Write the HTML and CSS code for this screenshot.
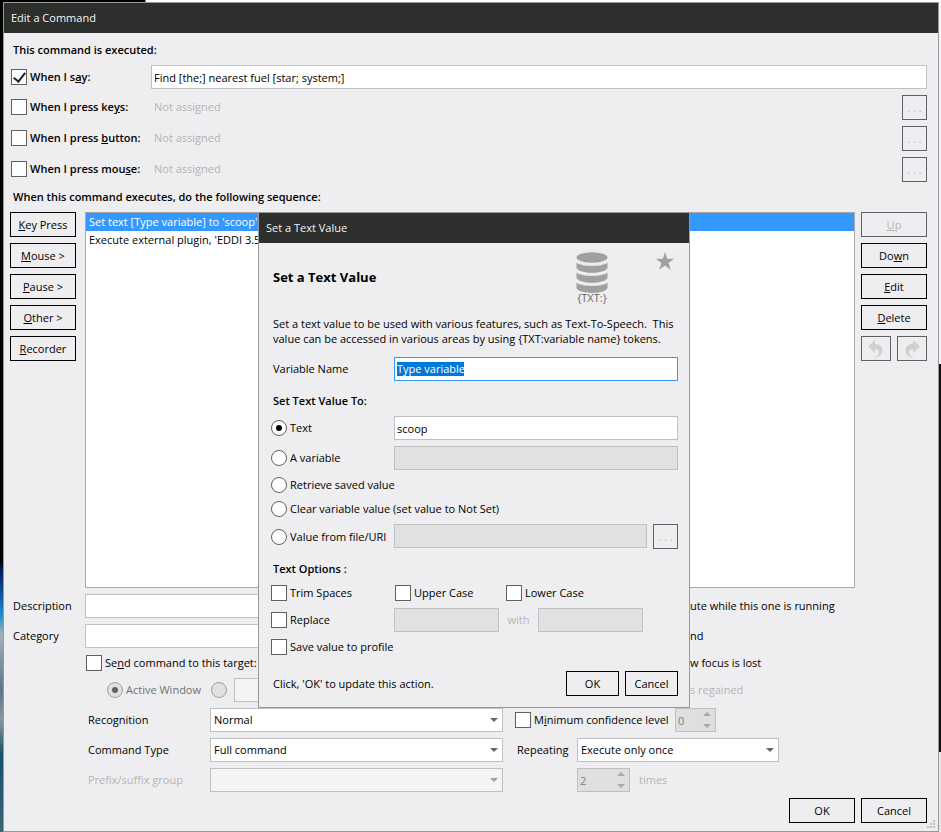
FILE: index.html
```html
<!DOCTYPE html>
<html lang="en">
<head>
<meta charset="UTF-8">
<meta name="viewport" content="width=device-width, initial-scale=1.0">
<title>Edit a Command</title>
<link rel="stylesheet" href="styles.css">
</head>
<body>
<div class="window">
  <div class="titlebar">Edit a Command</div>
  <form class="content">
    <h2>This command is executed:</h2>
    <div class="trigger">
      <label class="check"><input type="checkbox" checked><span>When I s<u>a</u>y:</span></label>
      <input class="field" type="text" aria-label="Spoken phrase" value="Find [the;] nearest fuel [star; system;]">
    </div>
    <div class="trigger">
      <label class="check"><input type="checkbox"><span>When I press ke<u>y</u>s:</span></label>
      <span class="unset">Not assigned</span>
      <button type="button" class="btn dots" disabled>. . .</button>
    </div>
    <div class="trigger">
      <label class="check"><input type="checkbox"><span>When I press <u>b</u>utton:</span></label>
      <span class="unset">Not assigned</span>
      <button type="button" class="btn dots" disabled>. . .</button>
    </div>
    <div class="trigger">
      <label class="check"><input type="checkbox"><span>When I press mou<u>s</u>e:</span></label>
      <span class="unset">Not assigned</span>
      <button type="button" class="btn dots" disabled>. . .</button>
    </div>

    <h2>When this command executes, do the following sequence:</h2>
    <div class="sequence">
      <div class="btn-column">
        <button type="button" class="btn"><u>K</u>ey Press</button>
        <button type="button" class="btn"><u>M</u>ouse &gt;</button>
        <button type="button" class="btn"><u>P</u>ause &gt;</button>
        <button type="button" class="btn"><u>O</u>ther &gt;</button>
        <button type="button" class="btn"><u>R</u>ecorder</button>
      </div>
      <ul class="actions">
        <li class="selected">Set text [Type variable] to 'scoop'</li>
        <li>Execute external plugin, 'EDDI 3.5.</li>
      </ul>
      <div class="btn-column">
        <button type="button" class="btn" disabled><u>U</u>p</button>
        <button type="button" class="btn">Do<u>w</u>n</button>
        <button type="button" class="btn"><u>E</u>dit</button>
        <button type="button" class="btn"><u>D</u>elete</button>
        <div class="history">
          <button type="button" class="btn" aria-label="Undo" disabled>
            <svg width="16" height="18" viewBox="0 0 16 18"><path d="M0 6.5 L7 0 V3.8 C12 4 15 7 14.6 11 C14.2 15 10.5 17.6 6 17.5 C9.5 16.5 11 14.5 10.800 12.300 C10.6 10.3 9.5 9.3 7 9.2 V13 Z"/></svg>
          </button>
          <button type="button" class="btn" aria-label="Redo" disabled>
            <svg width="16" height="18" viewBox="0 0 16 18"><path d="M16 6.5 L9 0 V3.8 C4 4 1 7 1.4 11 C1.8 15 5.5 17.6 10 17.5 C6.5 16.5 5 14.5 5.2 12.3 C5.4 10.3 6.5 9.3 9 9.2 V13 Z"/></svg>
          </button>
        </div>
      </div>
    </div>

    <div class="settings">
      <div class="left">
        <div class="row">
          <label class="name" for="description">Description</label>
          <input class="field" type="text" id="description">
        </div>
        <div class="row">
          <label class="name" for="category">Category</label>
          <input class="field" type="text" id="category">
        </div>
        <div class="target">
          <label class="check"><input type="checkbox"><span>Se<u>n</u>d command to this target:</span></label>
          <div class="target-options">
            <label class="check"><input type="radio" name="target" checked disabled><span>Active Window</span></label>
            <input type="radio" name="target" aria-label="Other window" disabled>
            <input class="field pale" type="text" aria-label="Window title" disabled>
          </div>
        </div>
        <div class="row option">
          <label for="recognition">Recognition</label>
          <span class="drop"><select id="recognition"><option>Normal</option></select></span>
        </div>
        <div class="row option">
          <label for="type">Command Type</label>
          <span class="drop"><select id="type"><option>Full command</option></select></span>
        </div>
        <div class="row option off">
          <label for="group">Prefix/suffix group</label>
          <span class="drop"><select id="group" disabled><option></option></select></span>
        </div>
      </div>

      <div class="right">
        <label class="check covered row"><input type="checkbox"><span>ute while this one is running</span></label>
        <label class="check covered row"><input type="checkbox"><span>nd</span></label>
        <div class="target">
          <label class="check covered"><input type="checkbox"><span>w focus is lost</span></label>
          <label class="check covered off"><input type="checkbox" disabled><span>s regained</span></label>
        </div>
        <div class="row confidence">
          <label class="check"><input type="checkbox"><span>M<u>i</u>nimum confidence level</span></label>
          <span class="spinner small"><input type="number" aria-label="Confidence level" value="0" disabled></span>
        </div>
        <div class="row repeat">
          <label for="repeat">Repeating</label>
          <span class="drop"><select id="repeat"><option>Execute only once</option></select></span>
        </div>
        <div class="row repeat off">
          <span class="spinner"><input type="number" id="times" value="2" disabled></span>
          <label for="times">times</label>
        </div>
      </div>
    </div>

    <div class="footer">
      <button type="button" class="btn">OK</button>
      <button type="button" class="btn">Cancel</button>
    </div>
  </form>
  <svg class="grip" width="8" height="8" viewBox="0 0 8 8"><path d="M6 0h2v2h-2zM3 3h2v2h-2zM6 3h2v2h-2zM0 6h2v2h-2zM3 6h2v2h-2zM6 6h2v2h-2z"/></svg>
</div>

<div class="dialog" role="dialog" aria-labelledby="dialog-title">
  <div class="titlebar" id="dialog-title">Set a Text Value</div>
  <form class="dialog-body">
    <div class="dialog-head">
      <h1>Set a Text Value</h1>
      <div class="token">
        <svg width="32" height="42" viewBox="0 0 32 42">
          <ellipse cx="16" cy="5.5" rx="15.5" ry="5.2"/>
          <path d="M.5 10.5 C5 15 27 15 31.5 10.5 V16 C29 22.3 3 22.3 .5 16 Z"/>
          <path d="M.5 20.5 C5 25 27 25 31.5 20.5 V26 C29 32.3 3 32.3 .5 26 Z"/>
          <path d="M.5 30.5 C5 35 27 35 31.5 30.5 V36 C29 42.6 3 42.6 .5 36 Z"/>
        </svg>
        <span>{TXT:}</span>
      </div>
      <svg class="star" width="18" height="18" viewBox="0 0 18 18"><path d="M9 0 L11.2 6.7 H18 L12.6 10.9 L14.7 17.7 L9 13.5 L3.3 17.7 L5.4 10.9 L0 6.7 H6.8 Z"/></svg>
    </div>
    <p>Set a text value to be used with various features, such as Text-To-Speech.&nbsp; This value can be accessed in various areas by using {TXT:variable name} tokens.</p>
    <div class="pair variable">
      <label for="variable">Variable Name</label>
      <div class="field focused"><input type="text" id="variable" value="Type variable"></div>
    </div>

    <h2>Set Text Value To:</h2>
    <div class="pair">
      <label class="check"><input type="radio" name="source" checked><span>Text</span></label>
      <input class="field" type="text" aria-label="Text" value="scoop">
    </div>
    <div class="pair">
      <label class="check"><input type="radio" name="source"><span>A variable</span></label>
      <input class="field" type="text" aria-label="A variable" disabled>
    </div>
    <label class="check"><input type="radio" name="source"><span>Retrieve saved value</span></label>
    <label class="check"><input type="radio" name="source"><span>Clear variable value (set value to Not Set)</span></label>
    <div class="pair">
      <label class="check"><input type="radio" name="source"><span>Value from file/URI</span></label>
      <div class="file">
        <input class="field" type="text" aria-label="File or URI" disabled>
        <button type="button" class="btn dots" disabled>. . .</button>
      </div>
    </div>

    <h2>Text Options :</h2>
    <div class="cases">
      <label class="check"><input type="checkbox"><span>Trim Spaces</span></label>
      <label class="check"><input type="checkbox"><span>Upper Case</span></label>
      <label class="check"><input type="checkbox"><span>Lower Case</span></label>
    </div>
    <div class="pair">
      <label class="check"><input type="checkbox"><span>Replace</span></label>
      <div class="replace off">
        <input class="field" type="text" id="find" aria-label="Replace" disabled>
        <label for="with">with</label>
        <input class="field" type="text" id="with" disabled>
      </div>
    </div>
    <label class="check"><input type="checkbox"><span>Save value to profile</span></label>

    <div class="dialog-footer">
      <span>Click, 'OK' to update this action.</span>
      <button type="button" class="btn">OK</button>
      <button type="button" class="btn">Cancel</button>
    </div>
  </form>
</div>
</body>
</html>
```
FILE: styles.css
```css
* {
  box-sizing: border-box;
}
body {
  margin: 0;
  padding: 2px 2px 0 3px;
  font: 11px/14px "Open Sans", "Noto Sans", sans-serif;
  color: #000;
  /* slivers of the desktop behind the window */
  background:
    linear-gradient(to right, #000 145px, #fff 146px) top / 100% 2px no-repeat,
    linear-gradient(#000 560px, #052060 572px, #0a4a90 590px, #1a90d0 615px, #9fb0bc 635px, #5f7488 690px, #8a95a0 720px, #15506a 755px, #3d6478 832px) left / 3px 100% no-repeat,
    linear-gradient(#f4f4f8 364px, #101214 364px, #101214 752px, #e8e8e8 752px) right / 3px 100% no-repeat;
}
h1, h2, p, ul {
  margin: 0;
  padding: 0;
}
h1 {
  font-size: 13px;
  line-height: 18px;
}
h2 {
  font-size: 11px;
  font-weight: 600;
  line-height: 18px;
  padding-left: 3px;
}
input, select, button {
  font: inherit;
  color: inherit;
  margin: 0;
}

/* windows */
.window, .dialog {
  background: #eeeef0;
  border: 1px solid #999;
}
.window {
  position: relative;
}
.titlebar {
  height: 30px;
  padding: 0 7px;
  line-height: 30px;
  background: #2d2f2c;
  color: #f4f4f4;
}
.content {
  display: flex;
  flex-direction: column;
  gap: 6px;
  padding: 8px 11px 8px 6px;
}

/* controls */
.field {
  width: 100%;
  min-width: 0;
  height: 24px;
  padding: 0 2px;
  border: 1px solid #c0c0c0;
  background: #fff;
}
.field:disabled {
  background: #e1e1e1;
}
.field.pale:disabled {
  background: #f4f4f4;
}
.btn {
  height: 25px;
  padding: 0;
  border: 1px solid #000;
  background: #eeeef0;
  text-align: center;
}
.btn:disabled {
  border-color: #606064;
  color: #b4b4b4;
}
.btn svg {
  display: block;
  margin: auto;
  fill: #d0d0d0;
}
.dots {
  flex: none;
  width: 25px;
}
.check {
  display: flex;
  align-items: center;
  gap: 3px;
  height: 18px;
  padding-left: 1px;
  white-space: nowrap;
}
input[type="checkbox"], input[type="radio"] {
  appearance: none;
  flex: none;
  display: flex;
  align-items: center;
  justify-content: center;
  width: 16px;
  height: 16px;
  border: 1px solid #606060;
  background: #fff;
}
input[type="radio"] {
  border-radius: 50%;
}
input[type="radio"]:checked::after {
  content: "";
  width: 6px;
  height: 6px;
  border-radius: 50%;
  background: #000;
}
input[type="radio"]:disabled {
  border-color: #a0a0a0;
  background: #e1e1e1;
}
input[type="radio"]:disabled::after {
  background: #606060;
}
input[type="checkbox"]:checked::after {
  content: "";
  width: 5px;
  height: 10px;
  margin-bottom: 3px;
  border: solid #222;
  border-width: 0 2px 2px 0;
  transform: rotate(38deg);
}
.off, .unset {
  color: #b4b4b4;
}
.drop {
  position: relative;
  flex: none;
}
.drop select {
  appearance: none;
  display: block;
  width: 100%;
  height: 24px;
  padding: 0 3px;
  border: 1px solid #c0c0c0;
  border-radius: 0;
  background: #fff;
}
.drop select:disabled {
  background: #f4f4f4;
  opacity: 1;
}
.drop::after {
  content: "";
  position: absolute;
  top: 10px;
  right: 5px;
  border: 4px solid transparent;
  border-top: 4px solid #666;
  border-bottom: 0;
  pointer-events: none;
}
.off .drop::after {
  border-top-color: #a0a0a0;
}
.spinner {
  position: relative;
  flex: none;
  width: 53px;
}
.spinner.small {
  width: 41px;
}
.spinner input {
  appearance: textfield;
  display: block;
  width: 100%;
  height: 24px;
  padding: 0 2px;
  border: 1px solid #c0c0c0;
  background: #dfdfdf;
  color: #808080;
}
.spinner::before, .spinner::after {
  content: "";
  position: absolute;
  right: 5px;
  border: 4px solid transparent;
}
.spinner::before {
  top: 4px;
  border-top: 0;
  border-bottom-color: #a8a8a8;
}
.spinner::after {
  bottom: 4px;
  border-bottom: 0;
  border-top-color: #a8a8a8;
}

/* what starts the command */
.trigger {
  display: flex;
  align-items: flex-start;
}
.trigger .check {
  flex: none;
  width: 141px;
  height: 24px;
  font-weight: 600;
}
.unset {
  flex: 1;
  padding-left: 3px;
  line-height: 24px;
}

/* action sequence */
.sequence {
  display: flex;
  gap: 6px;
  height: 376px;
}
.btn-column {
  display: flex;
  flex-direction: column;
  gap: 6px;
  width: 66px;
}
.history {
  display: grid;
  grid-template-columns: 1fr 1fr;
  gap: 6px;
}
.actions {
  flex: 1;
  margin-left: 3px;
  border: 1px solid #a8a8a8;
  background: #fff;
  list-style: none;
}
.actions li {
  height: 18px;
  padding: 0 3px;
  line-height: 18px;
}
.actions .selected {
  background: #3399ff;
  color: #fff;
}

/* command settings */
.settings {
  display: flex;
  gap: 12px;
}
.left {
  flex: none;
  width: 493px;
}
.right {
  flex: 1;
}
.left, .right {
  display: flex;
  flex-direction: column;
  gap: 6px;
}
.row {
  display: flex;
  align-items: center;
  height: 24px;
}
.name {
  flex: none;
  width: 75px;
  padding-left: 3px;
}
.target {
  display: flex;
  flex-direction: column;
  gap: 9px;
  height: 48px;
}
.left .target {
  padding: 0 0 0 75px;
}
.target .check, .target-options {
  flex: none;
}
.target-options {
  display: flex;
  align-items: center;
  height: 18px;
  padding-left: 21px;
  color: #707070;
}
.target-options .check {
  margin-right: 10px;
}
.target-options .field {
  margin-left: 7px;
}
.option {
  justify-content: space-between;
  padding-left: 78px;
}
.option .drop {
  width: 293px;
}
.confidence .check {
  width: 160px;
}
.right .check {
  padding-left: 0;
}
.covered span {
  margin-left: 156px;
}
.repeat {
  gap: 9px;
  padding-left: 2px;
}
.repeat .drop {
  width: 202px;
}
.repeat > label:first-child {
  width: 51px;
}
.repeat .spinner {
  margin-left: 60px;
}
.footer {
  display: flex;
  justify-content: flex-end;
  gap: 6px;
}
.footer .btn {
  width: 66px;
}
.grip {
  position: absolute;
  right: 3px;
  bottom: 3px;
  fill: #c0c0c0;
}

/* text value dialog, floats over the command window */
.dialog {
  position: absolute;
  top: 212px;
  left: 258px;
  width: 432px;
}
.dialog-body {
  display: flex;
  flex-direction: column;
  gap: 6px;
  padding: 9px 11px 11px;
}
.dialog-head {
  display: flex;
  height: 58px;
  padding: 0 4px 0 3px;
}
.dialog-head h1 {
  flex: 1;
  padding-top: 16px;
}
.token {
  display: flex;
  flex-direction: column;
  align-items: center;
  width: 34px;
  margin-right: 47px;
  font-size: 11px;
  line-height: 8px;
  color: #666;
  fill: #a0a0a0;
}
.star {
  fill: #a0a0a0;
}
.dialog-body p {
  padding-left: 3px;
  line-height: 15px;
}
.pair {
  display: grid;
  grid-template-columns: 124px 1fr;
  align-items: center;
}
.variable {
  margin-top: 5px;
}
.variable label {
  padding-left: 3px;
}
.dialog-body h2 {
  margin-top: 5px;
}
.focused {
  display: flex;
  align-items: center;
  border-color: #3399ff;
}
.focused input {
  width: 67px;
  height: 14px;
  padding: 0;
  border: 0;
  outline: 0;
  background: #0078d7;
  color: #fff;
}
.dialog-body .check {
  padding-left: 1px;
}
.file {
  display: flex;
  gap: 6px;
}
.cases {
  display: grid;
  grid-template-columns: 124px 111px 1fr;
}
.replace {
  display: flex;
  align-items: center;
}
.replace .field {
  width: 105px;
}
.replace label {
  width: 39px;
  text-align: center;
}
.dialog-footer {
  display: flex;
  align-items: center;
  gap: 6px;
  margin-top: 9px;
}
.dialog-footer span {
  flex: 1;
  padding-left: 3px;
}
.dialog-footer .btn {
  width: 53px;
}
```
